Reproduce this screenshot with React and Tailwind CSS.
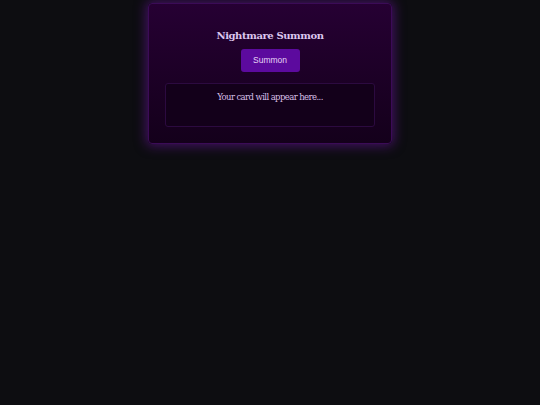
export default function App() {
  return (
    <div className="min-h-[405px] w-full bg-[#0d0d11] pt-[3px]" style={{ fontFamily: '"DejaVu Serif", Georgia, serif' }}>
      <div className="mx-auto w-[244px] h-[141px] rounded-[4px] border border-[#3b0b57] bg-gradient-to-b from-[#260033] to-[#14001b] shadow-[0_0_12px_2px_rgba(120,20,180,0.5)] px-4 pt-[27px]">
        <h1 className="text-center text-[10px] font-bold text-[#dcc6ee] leading-none tracking-[-0.4px]">Nightmare Summon</h1>
        <div className="flex justify-center mt-[8px]">
          <button className="w-[59px] h-[23px] rounded-[3px] bg-[#5c0a9e] text-[8.5px] text-[#e6d4f5]" style={{ fontFamily: '"Liberation Sans", Arial, sans-serif' }}>
            Summon
          </button>
        </div>
        <div className="mt-[11px] h-[44px] rounded-[3px] border border-[#2c0a40] bg-[#13001a] pt-[9px] text-center text-[8.5px] leading-none text-[#d6bfe6] tracking-[-0.6px]">
          Your card will appear here...
        </div>
      </div>
    </div>
  );
}
